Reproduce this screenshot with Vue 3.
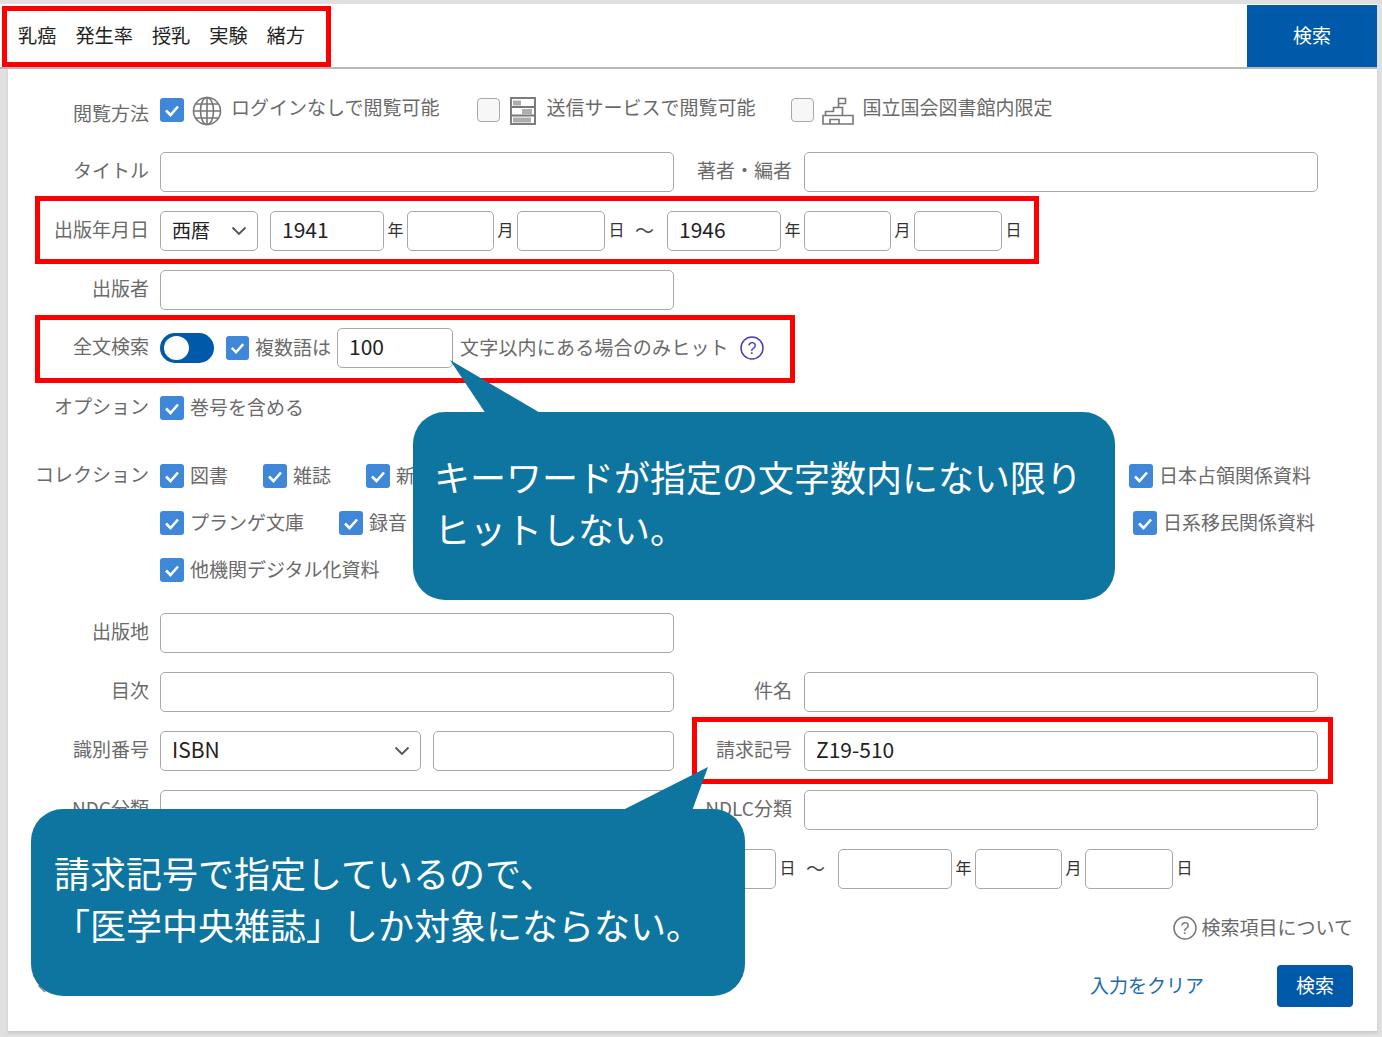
<script setup>
const pageWords = ['乳癌', '発生率', '授乳', '実験', '緒方']

const dateParts = (year) => [
    { unit: '年', size: 'year', value: year },
    { unit: '月', size: 'month', value: '' },
    { unit: '日', size: 'day', value: '' }
]

const publishedFrom = dateParts('1941')
const publishedTo = dateParts('1946')
const emptyDate = dateParts('')

// the middle of these rows sits under the callout
const collectionRows = [
    { cls: 'first', items: ['図書', '雑誌', '新聞'], last: '日本占領関係資料' },
    { cls: 'second', items: ['プランゲ文庫', '録音'], last: '日系移民関係資料' },
    { cls: '', items: ['他機関デジタル化資料'], last: '' }
]
</script>

<template>
    <div class="page">
        <header class="topbar">
            <div class="words">
                <span v-for="w in pageWords" :key="w">{{ w }}</span>
            </div>
            <button class="top-search">検索</button>
        </header>

        <main class="panel">
            <div class="row access">
                <div class="label access-label">閲覧方法</div>
                <span class="check on"><svg viewBox="0 0 24 24"><path d="M6 12.5l4.5 4.5L18 8.5" /></svg></span>
                <svg class="ico globe" viewBox="0 0 30 30">
                    <circle cx="15" cy="15" r="13.5" />
                    <ellipse cx="15" cy="15" rx="6.5" ry="13.5" />
                    <path d="M15 1.5v27M1.5 15h27M3.5 8h23M3.5 22h23" />
                </svg>
                <span class="access-text">ログインなしで閲覧可能</span>
                <span class="check off-first"></span>
                <svg class="ico shelf" viewBox="0 0 26 28">
                    <rect x="1" y="1" width="24" height="26" />
                    <path d="M1 10h24M1 18.5h24" stroke-width="2" />
                    <path class="books" d="M4 3.5v5M6 3.5v5M8 3.5v5M10 3.5v5M13 12v5M15 12v5M17 12v5M19 12v5M21 12v5M4 20.5v5M6 20.5v5M8 20.5v5M10 20.5v5M12 20.5v5M14 20.5v5M16 20.5v5M18 20.5v5M20 20.5v5" />
                </svg>
                <span class="access-text">送信サービスで閲覧可能</span>
                <span class="check off-second"></span>
                <svg class="ico building" viewBox="0 0 32 28">
                    <path d="M1 27V18.5h30V27zM3.5 18.5v-4h8v-4h9v8M16.5 10.5V1.5h7v5h-7" />
                    <path d="M8 27v-4.5h9V27" />
                </svg>
                <span class="access-text">国立国会図書館内限定</span>
            </div>

            <div class="row">
                <div class="label">タイトル</div>
                <input class="input half" />
                <div class="label pair">著者・編者</div>
                <input class="input half" />
            </div>

            <div class="row">
                <div class="label">出版年月日</div>
                <div class="select era">
                    <select><option>西暦</option></select>
                    <svg viewBox="0 0 16 10"><path d="M1.5 1.5L8 8l6.5-6.5" /></svg>
                </div>
                <template v-for="d in publishedFrom" :key="d.unit">
                    <input class="input" :class="d.size" :value="d.value" />
                    <span class="unit">{{ d.unit }}</span>
                </template>
                <span class="tilde">～</span>
                <template v-for="d in publishedTo" :key="d.unit">
                    <input class="input" :class="d.size" :value="d.value" />
                    <span class="unit">{{ d.unit }}</span>
                </template>
            </div>

            <div class="row">
                <div class="label">出版者</div>
                <input class="input half" />
            </div>

            <div class="row fulltext">
                <div class="label">全文検索</div>
                <span class="toggle"><i></i></span>
                <span class="check on near"><svg viewBox="0 0 24 24"><path d="M6 12.5l4.5 4.5L18 8.5" /></svg></span>
                <span class="text">複数語は</span>
                <input class="input near-input" value="100" />
                <span class="text tail-text">文字以内にある場合のみヒット</span>
                <svg class="help purple" viewBox="0 0 24 24">
                    <circle cx="12" cy="12" r="11" />
                    <text x="12" y="17.5" text-anchor="middle">?</text>
                </svg>
            </div>

            <div class="row option">
                <div class="label">オプション</div>
                <span class="check on"><svg viewBox="0 0 24 24"><path d="M6 12.5l4.5 4.5L18 8.5" /></svg></span>
                <span class="text">巻号を含める</span>
            </div>

            <div class="collections">
                <div class="row collection" v-for="(r, i) in collectionRows" :key="i" :class="r.cls">
                    <div class="label">{{ i === 0 ? 'コレクション' : '' }}</div>
                    <span class="item" v-for="t in r.items" :key="t">
                        <span class="check on"><svg viewBox="0 0 24 24"><path d="M6 12.5l4.5 4.5L18 8.5" /></svg></span>
                        <span class="text">{{ t }}</span>
                    </span>
                    <span class="item last" v-if="r.last">
                        <span class="check on"><svg viewBox="0 0 24 24"><path d="M6 12.5l4.5 4.5L18 8.5" /></svg></span>
                        <span class="text">{{ r.last }}</span>
                    </span>
                </div>
            </div>

            <div class="row place">
                <div class="label">出版地</div>
                <input class="input half" />
            </div>

            <div class="row">
                <div class="label">目次</div>
                <input class="input half" />
                <div class="label pair">件名</div>
                <input class="input half" />
            </div>

            <div class="row">
                <div class="label">識別番号</div>
                <div class="select idtype">
                    <select><option>ISBN</option></select>
                    <svg viewBox="0 0 16 10"><path d="M1.5 1.5L8 8l6.5-6.5" /></svg>
                </div>
                <input class="input idvalue" />
                <div class="label pair">請求記号</div>
                <input class="input half" value="Z19-510" />
            </div>

            <div class="row">
                <div class="label">NDC分類</div>
                <input class="input half" />
                <div class="label pair">NDLC分類</div>
                <input class="input half" />
            </div>

            <div class="row">
                <div class="label"></div>
                <div class="select wide"></div>
                <template v-for="d in emptyDate" :key="d.unit">
                    <input class="input" :class="d.size" />
                    <span class="unit">{{ d.unit }}</span>
                </template>
                <span class="tilde">～</span>
                <template v-for="d in emptyDate" :key="d.unit">
                    <input class="input" :class="d.size" />
                    <span class="unit">{{ d.unit }}</span>
                </template>
            </div>

            <div class="help-row">
                <svg class="help gray" viewBox="0 0 24 24">
                    <circle cx="12" cy="12" r="11" />
                    <text x="12" y="17.5" text-anchor="middle">?</text>
                </svg>
                <span class="text">検索項目について</span>
            </div>

            <div class="actions">
                <svg class="back" viewBox="0 0 10 16"><path d="M8 2L2 8l6 6" /></svg>
                <a class="clear">入力をクリア</a>
                <button class="search">検索</button>
            </div>
        </main>

        <!-- annotations drawn on top of the screenshot -->
        <div class="mark mark-words"></div>
        <div class="mark mark-date"></div>
        <div class="mark mark-fulltext"></div>
        <div class="mark mark-callno"></div>

        <svg class="tails" viewBox="0 0 1382 1037">
            <polygon points="450,360 486,414 542,414" />
            <polygon points="708,767 621,811 692,811" />
        </svg>
        <div class="callout callout-top">キーワードが指定の文字数内にない限り<br />ヒットしない。</div>
        <div class="callout callout-bottom">請求記号で指定しているので、<br />「医学中央雑誌」しか対象にならない。</div>
    </div>
</template>

<style scoped>
.page {
    position: relative;
    width: 1382px;
    height: 1037px;
    box-sizing: border-box;
    padding: 4px 5px 6px 0;
    overflow: hidden;
    background: #e0e0e0;
    font-family: "Noto Sans CJK JP", "Noto Sans", sans-serif;
    font-size: 19px;
    color: #6a6a6a;
}
.topbar {
    display: flex;
    justify-content: space-between;
    height: 63px;
    background: #fff;
    border-bottom: 2px solid #b8b8b8;
}
.words {
    display: flex;
    align-items: center;
    gap: 19px;
    padding: 0 0 2px 18px;
    font-size: 19.2px;
    color: #222;
}
.top-search {
    width: 130px;
    margin-top: 1px;
    padding-bottom: 4px;
    border: none;
    background: #0059a9;
    color: #fff;
    font: inherit;
}
.panel {
    margin-left: 8px;
    height: 962px;
    box-sizing: border-box;
    padding: 21px 24px 0 0;
    background: #fff;
    box-shadow: 0 2px 3px rgba(0, 0, 0, 0.12);
}
.row {
    display: flex;
    align-items: center;
    height: 40px;
    margin-bottom: 19px;
}
.label {
    flex: none;
    width: 141px;
    margin-right: 11px;
    padding-bottom: 6px;
    text-align: right;
    white-space: nowrap;
}
.label.pair {
    width: 118px;
    margin-right: 12px;
}
.input {
    flex: none;
    box-sizing: border-box;
    height: 40px;
    padding: 0 10.5px 4px 11px;
    border: 1.5px solid #a8a8a8;
    border-radius: 5px;
    background: #fff;
    color: #222;
    font-family: inherit;
    font-size: 21px;
    outline: none;
}
.half { width: 514px; }
.year { width: 114px; }
.month { width: 87px; }
.day { width: 88px; }
.unit {
    flex: none;
    width: 23px;
    padding-bottom: 5px;
    text-align: center;
    font-size: 16px;
    color: #333;
}
.tilde {
    flex: none;
    width: 39px;
    padding: 0 6px 4px 0;
    box-sizing: border-box;
    text-align: center;
    color: #444;
}
.select {
    position: relative;
    flex: none;
    box-sizing: border-box;
    height: 40px;
    margin-right: 12px;
    border: 1.5px solid #a8a8a8;
    border-radius: 5px;
    background: #fff;
}
.select select {
    width: 100%;
    height: 100%;
    padding: 0 10px 4px 11px;
    border: none;
    background: transparent;
    appearance: none;
    color: #222;
    font-family: inherit;
    font-size: 21px;
}
.era select { font-size: 19px; }
.select svg {
    position: absolute;
    right: 10px;
    top: 14px;
    width: 16px;
    height: 10px;
    fill: none;
    stroke: #555;
    stroke-width: 1.8;
}
.era { width: 98px; }
.idtype { width: 261px; }
.wide { width: 269px; }
.idvalue { width: 241px; }

.check {
    flex: none;
    display: block;
    box-sizing: border-box;
    width: 24px;
    height: 24px;
    border-radius: 3px;
}
.check.on { background: #3f87d8; }
.check svg {
    display: block;
    fill: none;
    stroke: #fff;
    stroke-width: 2.6;
}
.off-first,
.off-second {
    width: 23px;
    background: #f7f7f7;
    border: 1.5px solid #a8a8a8;
    border-radius: 4px;
}
.access {
    align-items: flex-start;
    padding-top: 8px;
    height: 32px;
    margin-bottom: 22px;
}
.access-label { margin-top: 1px; line-height: 28px; padding-bottom: 0; }
.access-text {
    margin-top: -3px;
    line-height: 24px;
    white-space: nowrap;
}
.ico {
    flex: none;
    margin-top: -2px;
    fill: none;
    stroke: #777;
    stroke-width: 1.6;
}
.globe { width: 30px; height: 30px; margin: -2px 9px 0 8px; }
.shelf { width: 26px; height: 28px; margin: -1px 10px 0 10px; }
.shelf rect { stroke-width: 1.9; }
.shelf .books { stroke-width: 1.2; stroke: #777; }
.building { width: 32px; height: 28px; margin: -1px 8px 0 8px; }
.off-first { margin-left: 38px; }
.off-second { margin-left: 36px; }

.fulltext { margin-top: -1px; margin-bottom: 20px; }
.toggle {
    flex: none;
    display: block;
    box-sizing: border-box;
    width: 54px;
    height: 30px;
    padding: 3px 4px;
    border-radius: 15px;
    background: #0059a9;
}
.toggle i {
    display: block;
    width: 25px;
    height: 24px;
    border-radius: 50%;
    background: #fff;
}
.near { width: 23px; margin-left: 12px; }
.near + .text { margin-left: 6px; }
.near-input { width: 116px; margin-left: 6px; }
.tail-text { margin-left: 7px; letter-spacing: 0.2px; }
.text { padding-bottom: 4px; white-space: nowrap; }
.help {
    flex: none;
    width: 24px;
    height: 24px;
    overflow: visible;
    fill: none;
    stroke-width: 1.5;
}
.help text {
    font-family: "Liberation Sans", sans-serif;
    font-size: 16px;
    stroke: none;
}
.help.purple { margin-left: 11px; stroke: #4b3fb4; }
.help.purple text { fill: #4b3fb4; }
.help.gray { stroke: #777; }
.help.gray text { fill: #777; }

.option { margin-bottom: 28px; }
.option .text { margin-left: 6px; }
.collections { margin-bottom: 23px; }
.collection { margin-bottom: 7px; }
.collection:last-child { margin-bottom: 0; }
.item {
    flex: none;
    display: flex;
    align-items: center;
    gap: 6px;
    margin-right: 35px;
}
.item.last { margin-left: auto; margin-right: 42px; }
.second .item.last { margin-right: 38px; }

.help-row {
    display: flex;
    align-items: center;
    justify-content: flex-end;
    gap: 5px;
    height: 24px;
    margin-top: 27px;
}
.actions {
    display: flex;
    align-items: center;
    height: 42px;
    margin-top: 25px;
}
.back {
    width: 10px;
    height: 16px;
    margin-left: 29px;
    fill: none;
    stroke: #888;
    stroke-width: 1.6;
}
.clear {
    margin-left: auto;
    margin-right: 73px;
    padding-bottom: 4px;
    color: #1b6bb4;
}
.search {
    width: 76px;
    height: 42px;
    padding-bottom: 4px;
    border: none;
    border-radius: 4px;
    background: #0059a9;
    color: #fff;
    font: inherit;
}

.mark {
    position: absolute;
    box-sizing: border-box;
    border: 5px solid #f00;
}
.mark-words { left: 2px; top: 6px; width: 329px; height: 61px; }
.mark-date { left: 35px; top: 196px; width: 1004px; height: 68px; }
.mark-fulltext { left: 35px; top: 315px; width: 760px; height: 68px; }
.mark-callno { left: 692px; top: 717px; width: 641px; height: 67px; }

.tails {
    position: absolute;
    left: 0;
    top: 0;
    width: 1382px;
    height: 1037px;
    fill: #0e74a0;
    pointer-events: none;
}
.callout {
    position: absolute;
    box-sizing: border-box;
    border-radius: 32px;
    background: #0e74a0;
    color: #fff;
    font-size: 36px;
    line-height: 52px;
    white-space: nowrap;
}
.callout-top {
    left: 413px;
    top: 412px;
    width: 702px;
    height: 188px;
    padding: 38px 0 0 21px;
}
.callout-bottom {
    left: 31px;
    top: 809px;
    width: 714px;
    height: 187px;
    padding: 37px 0 0 23px;
}
</style>

<style>
body { background: #e0e0e0; }
</style>
